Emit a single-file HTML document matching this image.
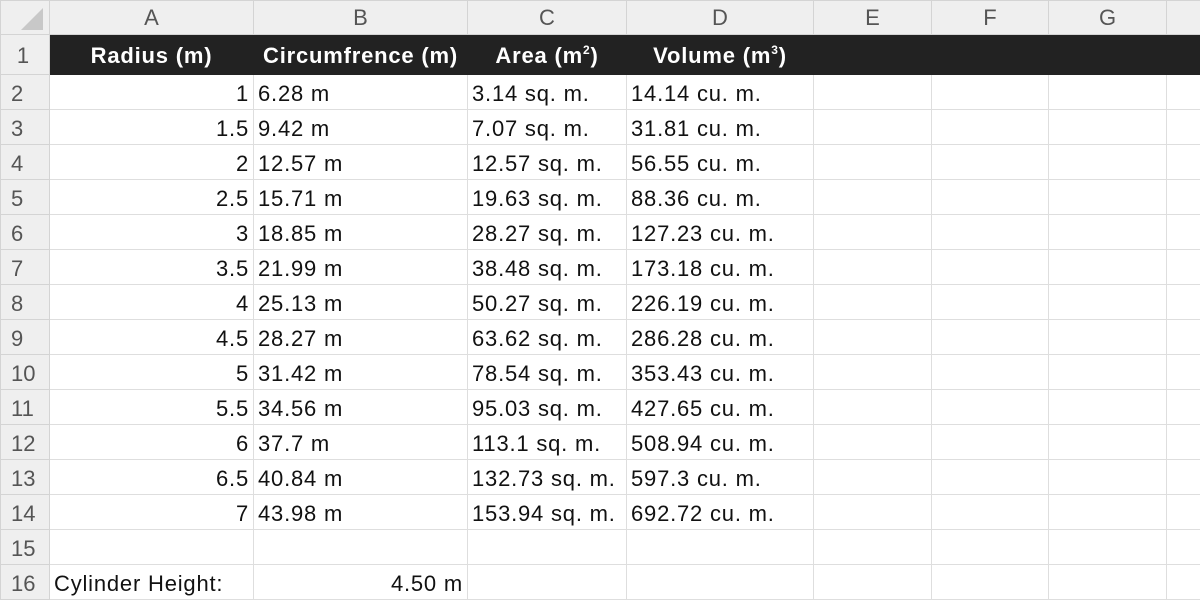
<!DOCTYPE html>
<html><head><meta charset="utf-8"><style>
body{margin:0;width:1200px;height:600px;overflow:hidden;background:#fff;font-family:"Liberation Sans",Arial,sans-serif;}
table{border-collapse:collapse;table-layout:fixed;width:1220px;}
td{border:1px solid #dedede;padding:3px 4px 0 4px;font-size:22px;letter-spacing:0.8px;color:#111;white-space:nowrap;overflow:hidden;height:35px;line-height:24px;box-sizing:border-box;}
tr.h td{background:#efefef;color:#555;text-align:center;font-size:22px;letter-spacing:0;height:34px;line-height:20px;border-color:#d4d4d4;padding-top:0;}
td.rh{background:#efefef;color:#555;text-align:left;padding-left:10px;font-size:22px;letter-spacing:0;border-color:#d4d4d4;}
tr.t td{background:#222;color:#fff;font-weight:bold;height:40px;border-color:#222;text-align:center;letter-spacing:0.8px}
tr.t td.rh{background:#efefef;color:#555;font-weight:normal;text-align:center;padding-left:0;border-color:#d4d4d4;letter-spacing:0}
.r{text-align:right;}
sup{font-size:12px;vertical-align:9px;line-height:0}
</style></head><body>
<table>
<col style="width:49px"><col style="width:204px"><col style="width:214px"><col style="width:159px"><col style="width:187px"><col style="width:118px"><col style="width:117px"><col style="width:118px"><col style="width:54px">
<tr class="h"><td class="rh" style="padding:0"><svg width="48" height="32" style="display:block"><polygon points="42,6 42,28 20,28" fill="#c8c8c8"/></svg></td><td>A</td><td>B</td><td>C</td><td>D</td><td>E</td><td>F</td><td>G</td><td></td></tr>
<tr class="t"><td class="rh">1</td><td>Radius (m)</td><td>Circumfrence (m)</td><td>Area (m<sup>2</sup>)</td><td>Volume (m<sup>3</sup>)</td><td></td><td></td><td></td><td></td></tr>
<tr><td class="rh">2</td><td class="r">1</td><td>6.28 m</td><td>3.14 sq. m.</td><td>14.14 cu. m.</td><td></td><td></td><td></td><td></td></tr>
<tr><td class="rh">3</td><td class="r">1.5</td><td>9.42 m</td><td>7.07 sq. m.</td><td>31.81 cu. m.</td><td></td><td></td><td></td><td></td></tr>
<tr><td class="rh">4</td><td class="r">2</td><td>12.57 m</td><td>12.57 sq. m.</td><td>56.55 cu. m.</td><td></td><td></td><td></td><td></td></tr>
<tr><td class="rh">5</td><td class="r">2.5</td><td>15.71 m</td><td>19.63 sq. m.</td><td>88.36 cu. m.</td><td></td><td></td><td></td><td></td></tr>
<tr><td class="rh">6</td><td class="r">3</td><td>18.85 m</td><td>28.27 sq. m.</td><td>127.23 cu. m.</td><td></td><td></td><td></td><td></td></tr>
<tr><td class="rh">7</td><td class="r">3.5</td><td>21.99 m</td><td>38.48 sq. m.</td><td>173.18 cu. m.</td><td></td><td></td><td></td><td></td></tr>
<tr><td class="rh">8</td><td class="r">4</td><td>25.13 m</td><td>50.27 sq. m.</td><td>226.19 cu. m.</td><td></td><td></td><td></td><td></td></tr>
<tr><td class="rh">9</td><td class="r">4.5</td><td>28.27 m</td><td>63.62 sq. m.</td><td>286.28 cu. m.</td><td></td><td></td><td></td><td></td></tr>
<tr><td class="rh">10</td><td class="r">5</td><td>31.42 m</td><td>78.54 sq. m.</td><td>353.43 cu. m.</td><td></td><td></td><td></td><td></td></tr>
<tr><td class="rh">11</td><td class="r">5.5</td><td>34.56 m</td><td>95.03 sq. m.</td><td>427.65 cu. m.</td><td></td><td></td><td></td><td></td></tr>
<tr><td class="rh">12</td><td class="r">6</td><td>37.7 m</td><td>113.1 sq. m.</td><td>508.94 cu. m.</td><td></td><td></td><td></td><td></td></tr>
<tr><td class="rh">13</td><td class="r">6.5</td><td>40.84 m</td><td>132.73 sq. m.</td><td>597.3 cu. m.</td><td></td><td></td><td></td><td></td></tr>
<tr><td class="rh">14</td><td class="r">7</td><td>43.98 m</td><td>153.94 sq. m.</td><td>692.72 cu. m.</td><td></td><td></td><td></td><td></td></tr>
<tr><td class="rh">15</td><td></td><td></td><td></td><td></td><td></td><td></td><td></td><td></td></tr>
<tr><td class="rh">16</td><td>Cylinder Height:</td><td class="r">4.50 m</td><td></td><td></td><td></td><td></td><td></td><td></td></tr>
</table>
</body></html>
